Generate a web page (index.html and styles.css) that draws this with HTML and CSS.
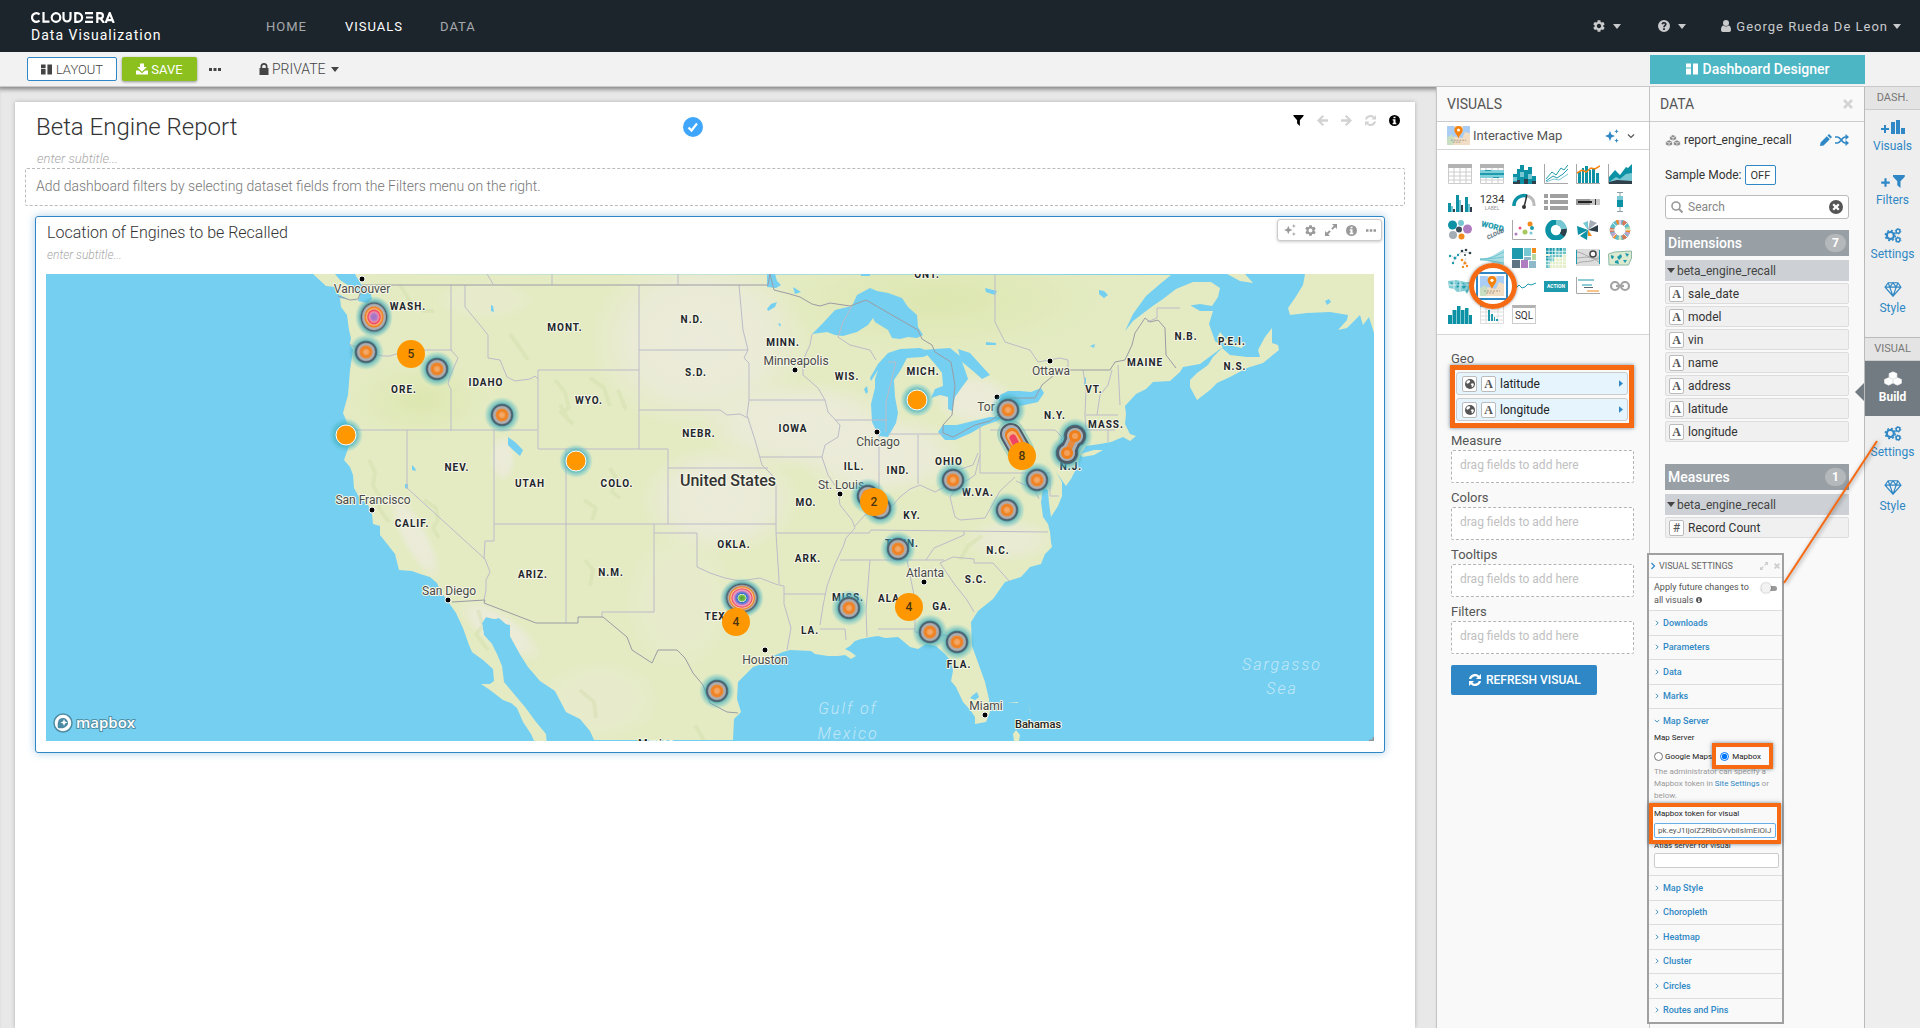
FILE: index.html
```html
<!DOCTYPE html>
<html lang="en">
<head>
  <meta charset="UTF-8">
  <meta name="viewport" content="width=device-width, initial-scale=1.0">
  <title>Beta Engine Report - Cloudera Data Visualization</title>
  <link rel="stylesheet" href="styles.css">
</head>
<body>
  <!-- icon sprite -->
  <svg class="sprite" aria-hidden="true">
    <symbol id="i-gear" viewBox="2 2 20 20"><path d="M19.14 12.94c.04-.3.06-.61.06-.94 0-.32-.02-.64-.07-.94l2.03-1.58c.18-.14.23-.41.12-.61l-1.92-3.32c-.12-.22-.37-.29-.59-.22l-2.39.96c-.5-.38-1.03-.7-1.62-.94l-.36-2.54c-.04-.24-.24-.41-.48-.41h-3.84c-.24 0-.43.17-.47.41l-.36 2.54c-.59.24-1.13.57-1.62.94l-2.39-.96c-.22-.08-.47 0-.59.22L2.74 8.87c-.12.21-.08.47.12.61l2.03 1.58c-.05.3-.09.63-.09.94s.02.64.07.94l-2.03 1.58c-.18.14-.23.41-.12.61l1.92 3.32c.12.22.37.29.59.22l2.39-.96c.5.38 1.03.7 1.62.94l.36 2.54c.05.24.24.41.48.41h3.84c.24 0 .44-.17.47-.41l.36-2.54c.59-.24 1.13-.56 1.62-.94l2.39.96c.22.08.47 0 .59-.22l1.92-3.32c.12-.22.07-.47-.12-.61l-2.01-1.58zM12 15.6c-1.98 0-3.6-1.62-3.6-3.6s1.62-3.6 3.6-3.6 3.6 1.62 3.6 3.6-1.62 3.6-3.6 3.6z"/></symbol>
    <symbol id="i-caret" viewBox="0 0 8 5"><path d="M0 0h8L4 5z"/></symbol>
    <symbol id="i-help" viewBox="0 0 12 12"><path fill-rule="evenodd" d="M6 0a6 6 0 1 0 0 12A6 6 0 0 0 6 0zM5.100 8.300h1.800V10H5.100zM3.500 3.900C3.800 2.600 4.700 2 6 2c1.500 0 2.600.9 2.600 2.200 0 1.700-1.800 1.800-1.800 3.100H5.200c0-1.900 1.700-2 1.700-3 0-.5-.4-.8-.9-.8s-.8.300-1 1z"/></symbol>
    <symbol id="i-user" viewBox="0 0 10 12"><circle cx="5" cy="3" r="3"/><path d="M0 10c0-3 1-4.500 2.500-4.500C4 6.900 6 6.900 7.500 5.500 9 5.500 10 7 10 10c0 1.300-.7 2-1.800 2H1.800C.7 12 0 11.300 0 10z"/></symbol>
    <symbol id="i-layout" viewBox="0 0 12 11"><path d="M0 0h5v4H0zM0 5h5v6H0zM7 0h5v11H7z"/></symbol>
    <symbol id="i-save" viewBox="0 0 12 11"><path d="M4 0h4v3.500h2.800L6 8.300 1.200 3.500H4zM0 7h2.800L6 9.800 9.200 7H12v4H0z"/></symbol>
    <symbol id="i-lock" viewBox="0 0 9 12"><path fill-rule="evenodd" d="M1 5V3.500a3.500 3.500 0 0 1 7 0V5h1v7H0V5zM2.700 5h3.600V3.500a1.800 1.800 0 0 0-3.600 0z"/></symbol>
    <symbol id="i-dots" viewBox="0 0 12 3"><path d="M0 0h3v3H0zM4.500 0h3v3h-3zM9 0h3v3H9z"/></symbol>
    <symbol id="i-filter" viewBox="0 0 11 12"><path d="M0 0h11v1.200L7 5.600V12L4 9.200V5.600L0 1.200z"/></symbol>
    <symbol id="i-arrow" viewBox="0 0 11 11"><path d="M5.500 0 7 1.500 4.300 4.300H11v2.400H4.300L7 9.500 5.500 11 0 5.500z"/></symbol>
    <symbol id="i-refresh" viewBox="0 0 12 12"><path d="M0 5A6 6 0 0 1 10.200 1.800L12 0v5H7l1.700-1.700A4 4 0 0 0 2.200 5zM12 7A6 6 0 0 1 1.800 10.200L0 12V7h5L3.300 8.700A4 4 0 0 0 9.800 7z"/></symbol>
    <symbol id="i-info" viewBox="0 0 12 12"><path fill-rule="evenodd" d="M6 0a6 6 0 1 0 0 12A6 6 0 0 0 6 0zM4.900 1.800h2.200v1.800H4.900zM4 4.600h3.100v3.900H8V10H4V8.500h.9V6.100H4z"/></symbol>
    <symbol id="i-spark" viewBox="0 0 14 14"><path d="M5 2l1.400 3.600L10 7 6.400 8.400 5 12 3.600 8.400 0 7l3.600-1.400zM11.500 0l.6 1.700 1.700.6-1.700.6-.6 1.700-.6-1.700-1.700-.6 1.700-.6zM11.500 9.300l.6 1.700 1.700.6-1.700.6-.6 1.700-.6-1.700-1.700-.6 1.700-.6z"/></symbol>
    <symbol id="i-expand" viewBox="0 0 12 12"><path d="M7 0h5v5l-1.800-1.800L7.600 5.800 6.200 4.400l2.600-2.600zM5 12H0V7l1.800 1.800 2.600-2.600 1.400 1.400-2.600 2.600z"/></symbol>
    <symbol id="i-close" viewBox="0 0 10 10"><path d="M2 0l3 3 3-3 2 2-3 3 3 3-2 2-3-3-3 3-2-2 3-3-3-3z"/></symbol>
    <symbol id="i-close-o" viewBox="0 0 14 14"><path fill-rule="evenodd" d="M7 0a7 7 0 1 0 0 14A7 7 0 0 0 7 0zM5 3.400l2 2 2-2L10.600 5l-2 2 2 2L9 10.600l-2-2-2 2L3.400 9l2-2-2-2z"/></symbol>
    <symbol id="i-chevron" viewBox="0 0 8 8"><path d="M1 2.500l3 3 3-3" fill="none" stroke="currentColor" stroke-width="1.200"/></symbol>
    <symbol id="i-pencil" viewBox="0 0 12 12"><path d="M9 0l3 3-1.500 1.500-3-3zM6.800 2.200l3 3L3.600 11.400 0 12l.6-3.600z"/></symbol>
    <symbol id="i-shuffle" viewBox="0 0 14 12"><path d="M0 3h2.500C5.500 3 7 9 10 9h1M0 9h2.500C5.500 9 7 3 10 3h1" fill="none" stroke="currentColor" stroke-width="1.700"/><path d="M10.500 0 14 3l-3.500 3zM10.500 6 14 9l-3.500 3z"/></symbol>
    <symbol id="i-search" viewBox="0 0 12 12"><circle cx="5" cy="5" r="4" fill="none" stroke="currentColor" stroke-width="1.600"/><path d="M8 8l3.500 3.500" stroke="currentColor" stroke-width="2"/></symbol>
    <symbol id="i-cubes" viewBox="0 0 18 14"><g stroke-width=".8" class="cube-line"><path d="M9 .4l3.800 1.700v3.700L9 7.500 5.200 5.800V2.100zM4.600 6.300l3.900 1.700v3.800l-3.900 1.800L.7 11.800V8zM13.400 6.300l3.900 1.700v3.800l-3.900 1.800-3.900-1.800V8z"/><path fill="none" d="M5.200 2.100L9 3.800l3.800-1.700M9 3.800v3.700M.7 8l3.900 1.800L8.500 8M4.600 9.800v3.800M9.500 8l3.900 1.800L17.300 8M13.400 9.800v3.800"/></g></symbol>
    <symbol id="i-bars" viewBox="0 0 24 15"><path d="M0 8h3V5h2v3h3v2H5v3H3v-3H0zM10 2h4v12h-4zM15 0h4v14h-4zM20 8h4v6h-4z"/></symbol>
    <symbol id="i-addfilter" viewBox="0 0 22 14"><path d="M0 7h3V4h2v3h3v2H5v3H3V9H0zM11 1h11v1.600l-4 4.200V13l-3-2.500V6.800l-4-4.200z"/></symbol>
    <symbol id="i-gears" viewBox="0 0 16 14"><g fill="none" stroke="currentColor"><circle cx="5.500" cy="7" r="3.300" stroke-width="2"/><circle cx="5.500" cy="7" r="4.700" stroke-width="1.300" stroke-dasharray="1.900 1.790"/><circle cx="12.700" cy="3" r="1.800" stroke-width="1.400"/><circle cx="12.700" cy="3" r="2.700" stroke-width=".9" stroke-dasharray="1.200 1.620"/><circle cx="12.700" cy="11" r="1.800" stroke-width="1.400"/><circle cx="12.700" cy="11" r="2.700" stroke-width=".9" stroke-dasharray="1.200 1.620"/></g></symbol>
    <symbol id="i-gem" viewBox="0 0 16 14"><path d="M3.500.7h9l2.900 4.100L8 13.300.6 4.800zM.6 4.800h14.800M5 4.800l3 8.500 3-8.500M3.500.7L5 4.800 8 .7l3 4.100L12.500.7" fill="none" stroke="currentColor" stroke-width="1.100"/></symbol>
    <symbol id="i-globe" viewBox="0 0 12 12"><circle cx="6" cy="6" r="6"/><path fill="#fff" d="M2.600 2.200C3.700 1.300 5 1.100 6 1.200l-.6 1.200 1 .6-.9 1.300-1.300.4-.4 1.100-1.300-.3-1-.6c.1-1 .5-1.900 1.100-2.700zM7.200 5.600l1.600-.5 1.800.6c.1 1.600-.6 3.100-1.900 4.100l-.9-.9.200-1.500-1.100-.7z"/></symbol>
    <symbol id="i-tri" viewBox="0 0 5 8"><path d="M0 0l5 4-5 4z"/></symbol>
    <symbol id="i-pinmap" viewBox="0 0 24 20">
      <path fill="#f1dcc4" d="M0 0h24v20H0z"/><path fill="#a9cdf4" d="M0 0h7l3 6 6 1 1-7h7v8l-5-2-3 7-8-2-8 4z"/><path fill="#c9dfc1" d="M0 12l5-3 3 5-2 6H0z"/>
      <path d="M4 15h16M6 17h9" stroke="#a99c8c" stroke-dasharray="2 1"/>
      <path fill="#f5820d" d="M12 0c2.600 0 4.400 1.800 4.400 4.200C16.400 7.200 13.500 9 12 13 10.500 9 7.600 7.200 7.600 4.200 7.600 1.800 9.400 0 12 0z"/><circle cx="12" cy="4.300" r="1.600" fill="#fff"/>
    </symbol>
  </svg>

  <header class="header">
    <a class="logo" href="#">
      <svg class="wordmark" viewBox="0 0 84 11" role="img" aria-label="Cloudera">
        <g fill="none" stroke="#fff" stroke-width="2.200">
          <path d="M8.500 2.600A4.300 4.300 0 1 0 8.500 8.400M12.500 0v9.700h6"/>
          <circle cx="25" cy="5.500" r="4.300"/>
          <path d="M32.500 0v6a3.400 3.400 0 0 0 7 0V0M44.300 1.200v8.600h2.500a4.300 4.300 0 0 0 0-8.600zM54 1.200h8M55 5.500h7M54 9.800h8M66.300 11V1.200h3a2.600 2.600 0 0 1 0 5.200h-3M69.500 6.400L73 11M74.700 11l4-10 4 10M76 8.200h5.500"/>
        </g>
      </svg>
      <span class="product">Data Visualization</span>
    </a>
    <nav class="nav">
      <a href="#">HOME</a>
      <a href="#" class="active">VISUALS</a>
      <a href="#">DATA</a>
    </nav>
    <div class="account">
      <button aria-label="Settings"><svg class="ic12"><use href="#i-gear"/></svg><svg class="caret"><use href="#i-caret"/></svg></button>
      <button aria-label="Help"><svg class="ic12"><use href="#i-help"/></svg><svg class="caret"><use href="#i-caret"/></svg></button>
      <button class="user"><svg class="ic12"><use href="#i-user"/></svg>George Rueda De Leon<svg class="caret"><use href="#i-caret"/></svg></button>
    </div>
  </header>

  <div class="toolbar">
    <button class="btn btn-layout"><svg class="ic11"><use href="#i-layout"/></svg>LAYOUT</button>
    <button class="btn btn-save"><svg class="ic12"><use href="#i-save"/></svg>SAVE</button>
    <button class="plain more" aria-label="More"><svg class="dots"><use href="#i-dots"/></svg></button>
    <button class="plain private"><svg class="ic12"><use href="#i-lock"/></svg>PRIVATE<svg class="caret"><use href="#i-caret"/></svg></button>
    <button class="designer"><svg class="ic12"><use href="#i-layout"/></svg>Dashboard Designer</button>
  </div>

  <main class="workspace">
    <section class="canvas">
      <div class="sheet">
        <div class="report-head">
          <h1>Beta Engine Report</h1>
          <svg class="check" viewBox="0 0 20 20"><circle cx="10" cy="10" r="10" fill="#3fa6fb"/><path d="M5.500 10.500l3 3 5.500-7" fill="none" stroke="#fff" stroke-width="2.200"/></svg>
          <div class="report-tools">
            <button aria-label="Filter" class="on"><svg class="ic11"><use href="#i-filter"/></svg></button>
            <button aria-label="Undo"><svg class="ic11"><use href="#i-arrow"/></svg></button>
            <button aria-label="Redo"><svg class="ic11 flip"><use href="#i-arrow"/></svg></button>
            <button aria-label="Refresh"><svg class="ic11"><use href="#i-refresh"/></svg></button>
            <button aria-label="Info" class="on"><svg class="ic11"><use href="#i-info"/></svg></button>
          </div>
        </div>
        <p class="subtitle">enter subtitle...</p>
        <div class="filter-drop">Add dashboard filters by selecting dataset fields from the Filters menu on the right.</div>

        <article class="visual">
          <div class="visual-tools">
            <button aria-label="Explore"><svg class="ic12"><use href="#i-spark"/></svg></button>
            <button aria-label="Visual settings"><svg class="ic11"><use href="#i-gear"/></svg></button>
            <button aria-label="Expand"><svg class="ic12"><use href="#i-expand"/></svg></button>
            <button aria-label="Visual info"><svg class="ic11"><use href="#i-info"/></svg></button>
            <button aria-label="Visual menu"><svg class="dots small-dots"><use href="#i-dots"/></svg></button>
          </div>
          <h2>Location of Engines to be Recalled</h2>
          <p class="subtitle small">enter subtitle...</p>

          <svg class="map" viewBox="46 274 1328 467">
            <defs>
              <radialGradient id="heat"><stop offset="0" stop-color="#f6b077"/><stop offset=".17" stop-color="#f19a4c"/><stop offset=".22" stop-color="#ef7f1a"/><stop offset=".34" stop-color="#ea8a3c"/><stop offset=".37" stop-color="#b5a79b"/><stop offset=".46" stop-color="#aab0b6"/><stop offset=".54" stop-color="#4d5c69"/><stop offset=".6" stop-color="#48727f"/><stop offset=".66" stop-color="#3fa9b8" stop-opacity=".65"/><stop offset="1" stop-color="#4cc0d0" stop-opacity="0"/></radialGradient>
              <radialGradient id="heat-mid"><stop offset="0" stop-color="#9a6fc0"/><stop offset=".17" stop-color="#b57cc9"/><stop offset=".24" stop-color="#f08fa8"/><stop offset=".32" stop-color="#ef4562"/><stop offset=".38" stop-color="#f6b077"/><stop offset=".47" stop-color="#ef7f1a"/><stop offset=".53" stop-color="#b5b3b3"/><stop offset=".6" stop-color="#9fa6ac"/><stop offset=".66" stop-color="#4d5c69"/><stop offset=".74" stop-color="#3f9fae" stop-opacity=".7"/><stop offset="1" stop-color="#4cc0d0" stop-opacity="0"/></radialGradient>
              <radialGradient id="heat-hot"><stop offset="0" stop-color="#4e9a2f"/><stop offset=".15" stop-color="#7cc24f"/><stop offset=".19" stop-color="#d9f0e0"/><stop offset=".22" stop-color="#2f63c4"/><stop offset=".27" stop-color="#5b86d8"/><stop offset=".31" stop-color="#9a6fc0"/><stop offset=".36" stop-color="#d491c9"/><stop offset=".4" stop-color="#f0a3ba"/><stop offset=".46" stop-color="#ef4562"/><stop offset=".5" stop-color="#f6c9a0"/><stop offset=".56" stop-color="#ef7f1a"/><stop offset=".61" stop-color="#b5b3b3"/><stop offset=".69" stop-color="#4d5c69"/><stop offset=".77" stop-color="#3f9fae" stop-opacity=".7"/><stop offset="1" stop-color="#4cc0d0" stop-opacity="0"/></radialGradient>
              <radialGradient id="glow"><stop offset=".5" stop-color="#3fa9b8"/><stop offset="1" stop-color="#4cc0d0" stop-opacity="0"/></radialGradient>
              <radialGradient id="plain"><stop offset="0" stop-color="#ecebdb"/><stop offset=".6" stop-color="#ecebdb" stop-opacity=".8"/><stop offset="1" stop-color="#ecebdb" stop-opacity="0"/></radialGradient>
              <radialGradient id="green"><stop offset="0" stop-color="#dde7b0"/><stop offset="1" stop-color="#dde7b0" stop-opacity="0"/></radialGradient>
              <clipPath id="land-clip"><use href="#land"/></clipPath>
            </defs>
            <path class="water" d="M46 274h1328v467H46z"/>
            <g class="land">
              <path id="land" d="M354 274l4 5 3 5 5 7 5 3 1 5-5 4-9-2-18-3 1 9 6 8 2 15 2 8-1 6 3 6-3 20-2 25-5 18 5 12 1 21-5 14 6 7 3 8 1 13 5 9 9 8 4 9 1 10 7 2v9l8 10 7 9 4 16 13 1 8 3 10 3 7 6 4 9 6 8 9 13 7 15 6 17 3 7 11 8 10 9 1 12-4 3h-9l9 6 13 10 8 3 6 5 6 14 8 12 5 11h11l-1-11-10-12-11-15-11-13-10-12-2-16-5-12-5-10-8-9-2-12 4-6 8 2 5-1 7 6 4 1v11l11 20 7 11 12 14 15 10 11 21 14 7 10 12 4 9h139l1-21 7-7-4-13 1-17 10-10 5-5 15-5 5-6 10-4 7-2 21 1 4 3 13 2h10l7-1 6 4 5-3-5-4-6-3 5-3 5-5 6-2 10-2 7-1 7 2 13-1 5 4 7 6 8 2 8-5 10 2 9 8 6 7 2 10-2 10 5 6 7 15 8 9 4 6v7l11-2 4-10-1-13-4-17-9-25-4-11-1-24 7-11 15-12 12-17 16-5 9-10 11-3 4-10 7-7-1-5-1-10-2-8-5-7-2-15 2-14 5 2 1 13 2 14 7-11 4-10v-14l-6-10 10 14 5-7 5-10 3-10 2-5 5-8 14-2 11-2 12-5 7 4 6-5-6-2-5-10 1-10-1-8 11-12 10-5 7-7 17-1 10-9 3-5 17-3 16-12 7-5-8-6-6-17 4-13h-13l-12-7-8 3 20-3 12 2 6-9 2-9-9-6h-18l-17 7-13 10-13 9-17 13-8 10 8-17 13-18 14-12 11-9z"/>
              <path d="M313 274l13 12 9 1 3 7 12 6 8 1 2-6-8-7-12-8-5-6z"/>
              <path d="M1222 348l-9 9-5 8-11 8-7 7v7l7 13 13-10 7-7 13-6 17-9 16-5 16-13-1-5-6-2v-15l-7 9-7 13 2 7h-13l-17-2z"/>
              <path d="M1217 338l3-6 5 6 10 5 10-1-3 6-14-3z"/>
              <path d="M1305 274l-2 11-8 13-7 10 2 7 17-2 23-1 18 3-1 5-9 10 9-2 13-13 3 10 6-8 5 16v-59h-6M1227 274l13 7 13 2-8-9z"/>
              <path d="M1018 450l-2 1zM1080 454l14-4 9 0-9 5-12 2zM1013 734l3-4 4 5-1 6h-5zM1028 703l2 7 1 5zM1007 703l11-1v1z"/>
            </g>
            <g clip-path="url(#land-clip)">
              <ellipse cx="700" cy="340" rx="110" ry="90" fill="url(#plain)"/><ellipse cx="720" cy="500" rx="80" ry="55" fill="url(#plain)"/><ellipse cx="800" cy="425" rx="100" ry="45" fill="url(#plain)"/><ellipse cx="880" cy="455" rx="85" ry="42" fill="url(#plain)"/><ellipse cx="680" cy="600" rx="55" ry="70" fill="url(#plain)" opacity=".4"/><ellipse cx="975" cy="400" rx="40" ry="26" fill="url(#plain)"/><ellipse cx="485" cy="300" rx="50" ry="20" fill="url(#plain)" opacity=".4"/><ellipse cx="415" cy="537" rx="14" ry="50" fill="url(#plain)" transform="rotate(-28 415 537)"/><ellipse cx="503" cy="458" rx="13" ry="24" fill="url(#plain)"/><ellipse cx="500" cy="630" rx="50" ry="18" fill="url(#plain)" transform="rotate(35 500 630)"/><ellipse cx="1010" cy="540" rx="45" ry="22" fill="url(#plain)" opacity=".7"/><ellipse cx="600" cy="700" rx="60" ry="40" fill="url(#plain)" opacity=".4"/><ellipse cx="940" cy="300" rx="170" ry="55" fill="url(#green)"/><ellipse cx="420" cy="400" rx="70" ry="40" fill="url(#green)"/>
              <g class="relief"><path d="M369 460l6 12-2 14 8 12-2 10 10 14M424 500l12 8 2 12-5 8 6 10M555 380l10 12 4 16-8 4 12 12M590 378l14 10 6 18M610 468l6 10-4 14 8 6M584 500l12 8-4 12M528 360l-8-12-10-14M400 285l10 16 14 10 10 0M585 560l8 10-3 16M960 560l8-14 14-10M580 690l14 12 2 16M695 725l8 14 6 8M478 610l5 16-7 8 12 16M618 390l8 20M560 405l8 14"/></g>
            </g>
            <g class="water">
              <path d="M812 334l11-11 12-13 17-4 5-11 13-7 7 3 11 2 14 5 6 9 9 8 1 12 5 8-6 3-9-1-8 2-8-1-4-8-13-8-2-4-5 7-11 7-14 4-8-1-8-3z"/>
              <path d="M888 353l12-4 20-1 13 5-10 4-16 1-7 13-6 9 1 17 3 16-2 10-8 14-9-1-7-14-1-18 4-16 0-9 3-9-7 11-1-3 8-14z"/>
              <path d="M923 350l12-1 15-1 10 8 5 14 3 9-6 8-7 10-3 14-4-2 0-12-8-2-9 3 4-9 8-3-1-13-7-9z"/>
              <path d="M958 349l12 4 9 10 11 12-8 4-9-8-12-10zM938 432l5-7h14l16-4 17-4 12 0-5 4-14 5-12 7-16 7-10 0zM998 396l10-5 12 0 11 1 10-4 3 5-6 9-18 4-14-1-7-4z"/>
              <path d="M508 437l7 5 8 8-3 6-7-6-5-5zM767 274h8l2 7 4 4-5 3-9-1zM767 309l4-5 6-2-2 5-7 4zM778 323l3 1-1 3zM793 287l8 5-6 2zM1099 290l5 1 4 4-4 3-5-4zM985 288l12 3-2 4-9-3zM986 342l10 1v2h-10zM1090 346l5-2-1 4zM1325 301l4-2 2 3-4 3zM412 465l3 3 1 3-4-1zM405 484l3 0 0 5-3-1zM491 305l2 1 1 6-3-1zM973 695l4-3 2 5-4 3-5-2zM861 274h9v2h-9zM344 274h11l4 9 4 6-3 4-8-5zM864 389l3-3 1 6-2 2zM1084 377l2 1 0 8-2 0z"/>
            </g>
            <g class="state-line">
              <path d="M349 344l17 8 17 4h7l6-2 29-4h27M451 285v65l7 8-8 18-2 8 3 5v42M350 430h187M407 430v58l78 71 5 13-4 8v10l-2 10M494 430v111h-9l-1 18M465 285v22l15 18 8 10v23l12 2 7 17 8 4 15-2 5-3 3 3v-9h101v79H538v-70M566 449v174M494 524h282M639 285v85M639 350h109M639 410h81l7 5 13-1 8 4M639 449h29v75M668 468h100M739 285l4 45 5 20-4 8 5 5v37l-2 15 8 25 7 25 10 10 4 10v48M749 400h76M760 457h62M812 334l-2 11-7 15v15l15 13 7 12 3 12 12 13-2 12-13 8-3 12 6 18 10 15 2 15 12 15 3 8-9 10-3 9-8 17-8 22-4 20-3 19M835 420h52M838 337l12 8 20 5 6 10M838 337l5-15 9-16M888 362h8l-10 40v30M879 435v50l-2 20M918 435v49M888 434h55M776 533h66M842 533h27l2-3 177 2M855 526l10-11 15-5 13-5 7-8 10-8 10-4 15 7 15-8 8-14 15-5 5-12M840 560h104M784 594h41M776 533l3 47v5l5 1v18l7 24-4 22M654 524v88h-52v5M654 533h43v34l13 6 15 5 15 3 20-3 18 7M870 560l-4 50 1 27M907 560l8 40v32l35 4M878 629h37M820 629h25l1 11M926 560l8-12 14-6 16-7v-4M940 563l13-6 21 2v4h19l17 19M940 563l15 22 12 15 7 12M980 425v48h70M990 430h65l7 7-2 12M980 455l-5 20-15 10-10 12 5 20 5 3 25-2 10-18 5-9 15-14M1050 475v21h9M1083 370l3 20-1 25 1 15-3 15M1112 370l-4 15-8 10-3 20M1118 365l2 40M1086 415h32M1086 430h29M1108 430v12M995 274v48l10 20 25 8 8 12 22-4 8 2v9M1147 322l10-4v-10h23M552 274v11M678 274v11M487 274l6 10M1016 481l18 8 5 10"/>
            </g>
            <g class="country-line">
              <path d="M338 296l12 4 8-1 4-10v-4h406l2-11 4 16 16 4 10 3 12 7 8 2 10-3 20 3 16-6 52 30 4 9 10 6 3 7 16 10 4 23-3 30-9 10v8l10 4 22-12 15-4 15-11 5-12h25l7-13 18-15h50l5-8 10-2 7-15 3-12 10-15 5 4 8-2 7 8 1 27 10 13"/>
              <path d="M452 602l33-2-1 3 52 20h42v-6h25l12 10 12 10 5 13 20 13 6-13h19l8 8 8 15 10 12 7 18 17 9 11 1"/>
            </g>

            <g class="state">
              <text x="408" y="310">WASH.</text><text x="404" y="393">ORE.</text><text x="486" y="386">IDAHO</text><text x="457" y="471">NEV.</text><text x="412" y="527">CALIF.</text><text x="565" y="331">MONT.</text><text x="692" y="323">N.D.</text><text x="696" y="376">S.D.</text><text x="589" y="404">WYO.</text><text x="699" y="437">NEBR.</text><text x="530" y="487">UTAH</text><text x="617" y="487">COLO.</text><text x="533" y="578">ARIZ.</text><text x="611" y="576">N.M.</text><text x="734" y="548">OKLA.</text><text x="717" y="620">TEX.</text><text x="783" y="346">MINN.</text><text x="847" y="380">WIS.</text><text x="923" y="375">MICH.</text><text x="793" y="432">IOWA</text><text x="854" y="470">ILL.</text><text x="898" y="474">IND.</text><text x="806" y="506">MO.</text><text x="912" y="519">KY.</text><text x="808" y="562">ARK.</text><text x="902" y="547">TENN.</text><text x="848" y="601">MISS.</text><text x="891" y="602">ALA.</text><text x="810" y="634">LA.</text><text x="942" y="610">GA.</text><text x="959" y="668">FLA.</text><text x="949" y="465">OHIO</text><text x="978" y="496">W.VA.</text><text x="998" y="554">N.C.</text><text x="976" y="583">S.C.</text><text x="1055" y="419">N.Y.</text><text x="1094" y="393">VT.</text><text x="1106" y="428">MASS.</text><text x="1071" y="470">N.J.</text><text x="1145" y="366">MAINE</text><text x="1186" y="340">N.B.</text><text x="1232" y="345">P.E.I.</text><text x="1235" y="370">N.S.</text><text x="927" y="278">ONT.</text>
            </g>
            <g class="city">
              <text x="362" y="293">Vancouver</text><text x="373" y="504">San Francisco</text><text x="449" y="595">San Diego</text><text x="796" y="365">Minneapolis</text><text x="878" y="446">Chicago</text><text x="841" y="489">St. Louis</text><text x="925" y="577">Atlanta</text><text x="765" y="664">Houston</text><text x="986" y="710">Miami</text><text x="1051" y="375">Ottawa</text><text x="986" y="411">Tor</text>
            </g>
            <g class="city-dot">
              <circle cx="362" cy="279" r="3"/><circle cx="372" cy="510" r="3"/><circle cx="448" cy="600" r="3"/><circle cx="795" cy="370" r="3"/><circle cx="877" cy="432" r="3"/><circle cx="840" cy="494" r="3"/><circle cx="924" cy="582" r="3"/><circle cx="765" cy="650" r="3"/><circle cx="985" cy="715" r="3"/><circle cx="1050" cy="361" r="3"/><circle cx="997" cy="397" r="3"/>
            </g>
            <text class="country" x="728" y="486">United States</text>
            <text class="bahamas" x="1038" y="728">Bahamas</text>
            <text class="bahamas" x="656" y="747">Mexico</text>
            <g class="sea">
              <text x="848" y="714">Gulf of</text><text x="848" y="739">Mexico</text>
              <text x="1282" y="670">Sargasso</text><text x="1282" y="694">Sea</text>
            </g>

            <!-- heat spots -->
            <g fill="url(#heat)">
              <circle cx="366" cy="352" r="18"/><circle cx="437" cy="369" r="18"/><circle cx="502" cy="415" r="18"/><circle cx="868" cy="496" r="18"/><circle cx="880" cy="508" r="18"/><circle cx="898" cy="549" r="18"/><circle cx="849" cy="608" r="18"/><circle cx="930" cy="632" r="18"/><circle cx="717" cy="691" r="18"/><circle cx="1008" cy="410" r="18"/><circle cx="1037" cy="480" r="18"/><circle cx="953" cy="480" r="18"/><circle cx="1007" cy="510" r="18"/><circle cx="957" cy="642" r="18"/>
            </g>
            <ellipse cx="374" cy="317" rx="19" ry="21" fill="url(#heat-mid)"/>
            <ellipse cx="742" cy="598" rx="22" ry="20" fill="url(#heat-hot)"/>
            <g class="merged">
              <circle cx="1075" cy="436" r="18" fill="url(#heat)"/><circle cx="1067" cy="453" r="18" fill="url(#heat)"/>
              <path d="M1075 436l-8 17" stroke="#4d5c69" stroke-width="17"/><path d="M1075 436h.1M1067 453h.1" stroke="#4d5c69" stroke-width="20"/><path d="M1075 436l-8 17" stroke="#aab0b6" stroke-width="12"/><path d="M1075 436h.1M1067 453h.1" stroke="#aab0b6" stroke-width="16"/><path d="M1075 436l-8 17" stroke="#e58a3e" stroke-width="6"/><path d="M1075 436h.1M1067 453h.1" stroke="#ef7f1a" stroke-width="12"/><path d="M1075 436h.1M1067 453h.1" stroke="#f3a05a" stroke-width="6"/>
              <path d="M1011 434l9 16" stroke="#3fa9b8" stroke-opacity=".35" stroke-width="28"/><path d="M1011 434l9 16" stroke="#4d5c69" stroke-width="22"/><path d="M1011 434l9 16" stroke="#aab0b6" stroke-width="18"/><path d="M1012 435l8 15" stroke="#ef7f1a" stroke-width="14"/><path d="M1012 436l8 14" stroke="#f6b077" stroke-width="10"/><path d="M1013 438l6 12" stroke="#ef4562" stroke-width="7"/>
            </g>

            <g fill="url(#glow)"><circle cx="346" cy="435" r="17"/><circle cx="576" cy="461" r="17"/><circle cx="917" cy="400" r="17"/></g>
            <g class="pin"><circle cx="346" cy="435" r="10"/><circle cx="576" cy="461" r="10"/><circle cx="917" cy="400" r="10"/></g>
            <g class="cluster">
              <circle cx="411" cy="354" r="14"/><text x="411" y="358">5</text>
              <circle cx="874" cy="502" r="14"/><text x="874" y="506">2</text>
              <circle cx="1022" cy="456" r="14"/><text x="1022" y="460">8</text>
              <circle cx="909" cy="607" r="14"/><text x="909" y="611">4</text>
              <circle cx="736" cy="622" r="14"/><text x="736" y="626">4</text>
            </g>

            <g class="mapbox">
              <circle cx="63" cy="723" r="9" fill="#fff" stroke="#4f8da3" stroke-width="1.500"/>
              <path d="M58 728c-1-5 0-10 5-10a5 5 0 0 1 5 5c0 4-5 6-10 5z" fill="#4a8aa2"/><path d="M64 719l1 2.500 2.500 1-2.500 1-1 2.500-1-2.500-2.500-1 2.500-1z" fill="#fff"/>
              <text x="76" y="728">mapbox</text>
            </g>
            <path d="M1374 737v4h-5" fill="none" stroke="#8f979c" stroke-width="3"/>
          </svg>
        </article>
      </div>
    </section>

    <aside class="panel visuals-panel">
      <h3 class="panel-title">VISUALS</h3>
      <div class="current-type">
        <svg class="ic-map"><use href="#i-pinmap"/></svg>
        <span>Interactive Map</span>
        <svg class="ic14 blue"><use href="#i-spark"/></svg>
        <svg class="ic8"><use href="#i-chevron"/></svg>
      </div>
      <div class="types">
        <button aria-label="Table"><svg viewBox="0 0 24 20"><path fill="#fff" stroke="#ccc" d="M.5.5h23v19H.5zM.5 8h23M.5 12h23M.5 16h23M6 3v17M12 3v17M18 3v17"/><path fill="#b3b3b3" d="M0 0h24v4H0z"/></svg></button>
        <button aria-label="Cross tabs"><svg viewBox="0 0 24 20"><path fill="#fff" stroke="#ccc" d="M.5.500h23v19H.5zM.5 16h23M6 3v17M12 3v17M18 3v17"/><path fill="#b3b3b3" d="M0 0h24v4H0z"/><path fill="#7fd0da" d="M0 6h24v8H0z"/><path fill="#1e9aac" d="M0 9h24v2H0zM5 6h6v1H5zM13 13h6v1h-6z"/></svg></button>
        <button aria-label="Stacked bars"><svg viewBox="0 0 24 20"><path fill="#0d92a5" d="M1 10h4v10H1zM5 5h3v15H5zM8 1h4v19H8zM12 6h4v14h-4zM16 3h4v17h-4zM20 12h4v8h-4z"/><path fill="#78c8d4" d="M1 13h4v4H1zM8 8h4v5H8zM16 10h4v5h-4z"/><path fill="#30404b" d="M1 18h4v2H1zM5 16h3v4H5zM12 15h4v5h-4zM20 17h4v3h-4z"/></svg></button>
        <button aria-label="Lines"><svg viewBox="0 0 24 20"><path fill="none" stroke="#a8a8a8" d="M.5 0v19.500H24"/><path fill="none" stroke="#1e9aac" d="M2 15l6-7 4 3 5-7 3 2 4-5M2 17l7-5 4 2 6-4 5-5"/><path fill="none" stroke="#78c8d4" d="M2 18l8-3 5 1 9-6"/></svg></button>
        <button aria-label="Combo"><svg viewBox="0 0 24 20"><path fill="none" stroke="#a8a8a8" d="M.5 0v19.500H24"/><path fill="#0d92a5" d="M2 8h3v11H2zM6 4h2v15H6zM9 2h3v17H9zM13 6h2v13h-2zM16 4h3v15h-3zM20 9h3v10h-3z"/><path fill="none" stroke="#f5820d" stroke-width="1.500" d="M1 9l5-3 4 2 5-4 4 1 5-3"/></svg></button>
        <button aria-label="Areas"><svg viewBox="0 0 24 20"><path fill="#78c8d4" d="M1 15l7-6 5 4 5-6 6 2v11H1z"/><path fill="#0d92a5" d="M1 13l6-7 5 5 6-8 2 1 4-4v9l-6 1-6 5-4-2-7 5z"/><path fill="#30404b" d="M1 18l8-2 15 1v3H1z"/><path fill="none" stroke="#a8a8a8" d="M.5 0v19.500"/></svg></button>
        <button aria-label="Grouped bars"><svg viewBox="0 0 24 20"><path fill="#0d92a5" d="M0 11h3v9H0zM8 3h3v17H8zM17 5h3v15h-3z"/><path fill="#78c8d4" d="M3 14h2v6H3zM11 8h2v12h-2zM20 12h2v8h-2z"/><path fill="#30404b" d="M5 17h2v3H5zM13 13h2v7h-2zM22 15h2v5h-2z"/></svg></button>
        <button class="kpi" aria-label="KPI"><b>1234</b><small>LABEL</small></button>
        <button aria-label="Gauge"><svg viewBox="0 0 24 20"><path fill="none" stroke="#0d92a5" stroke-width="3.500" d="M2 14a10 10 0 0 1 13-10"/><path fill="none" stroke="#bbb" stroke-width="3" d="M16 4a10 10 0 0 1 6 10"/><path stroke="#333" stroke-width="1.500" d="M12 15l3-12"/><circle cx="12" cy="15" r="2" fill="#333"/></svg></button>
        <button aria-label="List"><svg viewBox="0 0 24 20"><path fill="#a0a0a0" d="M0 2h4v4H0zM6 2h18v4H6zM0 8h4v4H0zM6 8h18v4H6zM0 14h4v4H0zM6 14h18v4H6z"/></svg></button>
        <button aria-label="Bullet"><svg viewBox="0 0 24 20"><path fill="#c7c7c7" d="M0 7h24v6H0z"/><path fill="#999" d="M0 7h14v6H0z"/><path fill="#222" d="M2 9h14v2H2z"/><path fill="#333" d="M19 7h1v6h-1z"/></svg></button>
        <button aria-label="Box plot"><svg viewBox="0 0 24 20"><path stroke="#8aa0a6" d="M12 0v20M9 .500h6M9 19.500h6"/><path fill="#78c8d4" d="M9 4h6v11H9z"/><path fill="#0d92a5" d="M9 8h6v7H9z"/></svg></button>
        <button aria-label="Packed bubbles"><svg viewBox="0 0 24 20"><circle cx="4.500" cy="5" r="4.500" fill="#0d92a5"/><circle cx="13" cy="3" r="3" fill="#78c8d4"/><circle cx="19.500" cy="9" r="4.500" fill="#b07cc0"/><circle cx="11" cy="9.500" r="3" fill="#3e4f5b"/><circle cx="5" cy="15" r="4" fill="#a4adb5"/><circle cx="13.500" cy="16.500" r="3" fill="#f28a1c"/></svg></button>
        <button class="cloud" aria-label="Word cloud"><b>WORD</b><i>CLOUD</i></button>
        <button aria-label="Scatter"><svg viewBox="0 0 24 20"><path fill="none" stroke="#a8a8a8" d="M.5 0v19.500H24"/><circle cx="18" cy="4" r="2.500" fill="#f28a1c"/><circle cx="20" cy="8" r="2" fill="#1e9aac"/><circle cx="13" cy="12" r="2.500" fill="#a7c95b"/><circle cx="8" cy="8" r="1.500" fill="#e4577b"/><circle cx="19" cy="13" r="1.500" fill="#78c8d4"/><circle cx="4" cy="14" r="1.500" fill="#b07cc0"/></svg></button>
        <button aria-label="Pie"><svg viewBox="0 0 24 20"><g fill="none" stroke-width="5.500"><circle cx="12" cy="10" r="8" stroke="#0d92a5"/><path d="M12 2A8 8 0 0 1 20 10" stroke="#78c8d4"/><path d="M20 9a8 8 0 0 1-2 6" stroke="#30404b"/></g></svg></button>
        <button aria-label="Radial"><svg viewBox="0 0 24 20"><path fill="#0d92a5" d="M12 10L2 15 1 6zM12 10l-1 10-7-4z"/><path fill="#78c8d4" d="M12 10L7 3l5-2z"/><path fill="#a4adb5" d="M12 10l2-10 7 3z"/><path fill="#30404b" d="M12 10l10-5v7z"/><path fill="#f28a1c" d="M12 10l4 6h-4z"/></svg></button>
        <button aria-label="Chord"><svg viewBox="0 0 24 20"><g fill="none" stroke-width="4.500"><circle cx="12" cy="10" r="8" stroke="#5fbccb"/><circle cx="12" cy="10" r="8" stroke="#c1a2cf" stroke-dasharray="5 12"/><circle cx="12" cy="10" r="8" stroke="#f28a1c" stroke-dasharray="2 15"/><circle cx="12" cy="10" r="8" stroke="#d6785a" stroke-dasharray="0 6 4 7"/><circle cx="12" cy="10" r="8" stroke="#b9d8a0" stroke-dasharray="0 11 3 22"/></g><path stroke="#fff" stroke-width=".8" d="M12 0v20M2 10h20M5 3l14 14M19 3L5 17"/></svg></button>
        <button aria-label="Network"><svg viewBox="0 0 24 20"><path stroke="#b9c2c8" stroke-width=".6" fill="none" d="M2 7l5 3-2 5M7 10l6-6 9 1M15 17l3-7"/><g fill="#1e9aac"><circle cx="2" cy="8" r="1.200"/><circle cx="7" cy="10" r="1.500"/><circle cx="5" cy="15" r="1.200"/><circle cx="10" cy="7" r="1.200"/></g><g fill="#30404b"><circle cx="14" cy="3" r="1.300"/><circle cx="18" cy="2" r="1.300"/><circle cx="22" cy="5" r="1.300"/><circle cx="17" cy="7" r="1"/></g><g fill="#f28a1c"><circle cx="14" cy="12" r="1.300"/><circle cx="17" cy="15" r="1.500"/><circle cx="15" cy="19" r="1.200"/><circle cx="19" cy="18" r="1.200"/></g></svg></button>
        <button aria-label="Flow"><svg viewBox="0 0 24 20"><path fill="#a9dde3" d="M0 11C12 10 15 6 24 1v16c-8 0-12-4-24-5z"/><path stroke="#5bbcc9" fill="none" stroke-width=".7" d="M0 11c12 0 15-3 24-7M0 11c12 0 16-1 24-2M0 12c12 0 16 2 24 3"/></svg></button>
        <button aria-label="Treemap"><svg viewBox="0 0 24 20"><path fill="#1e9aac" d="M0 0h11v11H0z"/><path fill="#78c8d4" d="M12 0h7v8h-7z"/><path fill="#f28a1c" d="M20 0h4v5h-4z"/><path fill="#b9d8a0" d="M20 6h4v6h-4z"/><path fill="#5f7482" d="M0 12h8v8H0z"/><path fill="#b07cc0" d="M9 12h7v8H9z"/><path fill="#8fb9c9" d="M12 9h7v3h-7zM17 13h7v7h-7z"/></svg></button>
        <button aria-label="Heatmap"><svg viewBox="0 0 24 20"><path fill="#e5efc9" d="M2 0h20v20H2z"/><path fill="#1e9aac" d="M2 0h8v6H2zM13 0h5v3h-5zM2 8h4v4H2z"/><path fill="#6cc3c6" d="M10 0h3v9h-3zM18 0h4v6h-4zM6 6h4v8H6zM13 3h5v6h-5zM2 12h4v8H2z"/><path stroke="#fff" stroke-width=".7" d="M5 0v20M8.300 0v20M11.600 0v20M15 0v20M18.500 0v20M2 3.300h20M2 6.600h20M2 10h20M2 13.300h20M2 16.600h20"/></svg></button>
        <button aria-label="Flow settings"><svg viewBox="0 0 24 20"><path fill="#ddd" d="M0 1h24v17H0z"/><path stroke="#aaa" fill="none" d="M0 4c8 0 14 8 24 7M0 10c8 0 14-4 24 5M0 16c8-5 14 1 24-8"/><path fill="#1e9aac" d="M0 2h1v14H0zM23 2h1v14h-1z"/><circle cx="17" cy="6" r="3" fill="#fff" stroke="#444" stroke-width="1.500"/></svg></button>
        <button aria-label="Choropleth"><svg viewBox="0 0 24 20"><path fill="#dcebd0" stroke="#8eb8a8" d="M.5 6l6-2 17-1v7l-3 7H1z"/><path fill="#1e9aac" d="M3 7l3 1-1 3-2-1zM9 9l4-3 1 3-3 3zM17 5l4 1-2 3zM7 13l3-1 1 4-4-1zM15 12h4l-2 3z"/></svg></button>
        <button aria-label="US map"><svg viewBox="0 0 24 20"><path fill="#83cdd5" d="M0 5l8-1 10 2 6 0-2 6-3 6-2-3-8 1-3-3-5-1z"/><path fill="#1e9aac" d="M2 6l3 1-1 2zM8 9l3-3 1 4-3 2zM15 7l4 2-3 4-2-2zM18 15l2-2-1 4z"/><path stroke="#e8f6f7" stroke-width=".8" d="M6 4v9M12 5v10M1 9h20"/></svg></button>
        <button class="selected" aria-label="Interactive map"><svg viewBox="0 0 24 20"><use href="#i-pinmap"/></svg></button>
        <button aria-label="Sparkline"><svg viewBox="0 0 24 20"><path fill="none" stroke="#1e9aac" d="M0 12l4 0 3-3 3 3 3-1 3-3 3 1 5-2"/></svg></button>
        <button class="action" aria-label="Action"><b>ACTION</b></button>
        <button aria-label="Gantt"><svg viewBox="0 0 24 20"><path fill="none" stroke="#a8a8a8" d="M.5 1v16.500H24"/><path fill="none" stroke="#1e9aac" d="M2 4h16M6 9h10"/><path fill="none" stroke="#30404b" stroke-width=".8" d="M8 11.500h9"/><path fill="none" stroke="#f28a1c" d="M11 15h12"/></svg></button>
        <button aria-label="Link"><svg viewBox="0 0 24 20"><g fill="none" stroke="#a3a3a3" stroke-width="2.200"><rect x="3" y="6" width="8" height="8" rx="4"/><rect x="13" y="6" width="8" height="8" rx="4"/><path d="M8 10h8"/></g></svg></button>
        <button aria-label="Histogram"><svg viewBox="0 0 24 20"><path fill="#0d92a5" d="M0 11h4v9H0zM4.500 6h4v14h-4zM9 2h3.500v18H9zM13 6h3.500v14H13zM17 4h3.500v16H17zM21 11h3v9h-3z"/></svg></button>
        <button aria-label="Table bars"><svg viewBox="0 0 24 20"><path fill="#fff" stroke="#ddd" d="M.5.500h23v19H.5zM.5 8h23M.5 12h23M.5 16h23M6 3v17M18 3v17"/><path fill="#b3b3b3" d="M0 0h24v3H0z"/><path fill="#1e9aac" d="M8 6h2v11H8zM11 10h2v7h-2zM14 13h1v4h-1zM16 15h2v2h-2z"/></svg></button>
        <button class="sql" aria-label="SQL"><b>SQL</b></button>
        <span class="ring"></span>
      </div>

      <div class="shelves">
        <div class="shelf-label">Geo</div>
        <div class="highlight geo">
          <button class="pill"><span class="tag"><svg class="ic10"><use href="#i-globe"/></svg></span><span class="tag">A</span>latitude<svg class="tri"><use href="#i-tri"/></svg></button>
          <button class="pill"><span class="tag"><svg class="ic10"><use href="#i-globe"/></svg></span><span class="tag">A</span>longitude<svg class="tri"><use href="#i-tri"/></svg></button>
        </div>
        <div class="shelf-label">Measure</div>
        <div class="shelf">drag fields to add here</div>
        <div class="shelf-label">Colors</div>
        <div class="shelf">drag fields to add here</div>
        <div class="shelf-label">Tooltips</div>
        <div class="shelf">drag fields to add here</div>
        <div class="shelf-label">Filters</div>
        <div class="shelf">drag fields to add here</div>
        <button class="refresh"><svg class="ic12"><use href="#i-refresh"/></svg>REFRESH VISUAL</button>
      </div>
    </aside>

    <aside class="panel data-panel">
      <h3 class="panel-title">DATA<button class="plain close" aria-label="Close"><svg class="ic10"><use href="#i-close"/></svg></button></h3>
      <div class="data-body">
        <div class="dataset"><svg class="cubes"><use href="#i-cubes"/></svg><span>report_engine_recall</span><svg class="ic12 blue"><use href="#i-pencil"/></svg><svg class="ic14 blue"><use href="#i-shuffle"/></svg></div>
        <div class="sample"><span>Sample Mode:</span><button>OFF</button></div>
        <div class="search"><svg class="ic12"><use href="#i-search"/></svg><input type="text" placeholder="Search" aria-label="Search"><button class="plain" aria-label="Clear"><svg class="ic14"><use href="#i-close-o"/></svg></button></div>

        <div class="group"><span>Dimensions</span><span class="count">7</span></div>
        <div class="source"><svg class="caret"><use href="#i-caret"/></svg>beta_engine_recall</div>
        <ul class="fields">
          <li><span class="tag">A</span>sale_date</li>
          <li><span class="tag">A</span>model</li>
          <li><span class="tag">A</span>vin</li>
          <li><span class="tag">A</span>name</li>
          <li><span class="tag">A</span>address</li>
          <li><span class="tag">A</span>latitude</li>
          <li><span class="tag">A</span>longitude</li>
        </ul>
        <div class="group measures"><span>Measures</span><span class="count">1</span></div>
        <div class="source"><svg class="caret"><use href="#i-caret"/></svg>beta_engine_recall</div>
        <ul class="fields">
          <li><span class="tag hash">#</span>Record Count</li>
        </ul>
      </div>

      <section class="settings-popup">
        <div class="popup-head"><svg class="ic8 right"><use href="#i-chevron"/></svg><span>VISUAL SETTINGS</span><svg class="ic8"><use href="#i-expand"/></svg><svg class="ic6"><use href="#i-close"/></svg></div>
        <div class="apply"><label for="apply-all">Apply future changes to all visuals <svg class="ic6"><use href="#i-info"/></svg></label><input type="checkbox" id="apply-all"></div>
        <div class="rows four">
          <a href="#"><svg class="ic6 right"><use href="#i-chevron"/></svg>Downloads</a>
          <a href="#"><svg class="ic6 right"><use href="#i-chevron"/></svg>Parameters</a>
          <a href="#"><svg class="ic6 right"><use href="#i-chevron"/></svg>Data</a>
          <a href="#"><svg class="ic6 right"><use href="#i-chevron"/></svg>Marks</a>
        </div>
        <div class="server">
          <a href="#" class="open"><svg class="ic6"><use href="#i-chevron"/></svg>Map Server</a>
          <p class="server-label">Map Server</p>
          <div class="radios">
            <label><input type="radio" name="server">Google Maps</label>
            <label class="highlight pick"><input type="radio" name="server" checked>Mapbox</label>
          </div>
          <p class="hint">The administrator can specify a Mapbox token in <a href="#">Site Settings</a> or below.</p>
          <div class="highlight token">
            <label for="token">Mapbox token for visual</label>
            <input type="text" id="token" value="pk.eyJ1IjoiZ2RlbGVvbiIsImEiOiJ">
          </div>
          <label class="atlas" for="atlas">Atlas server for visual</label>
          <input type="text" id="atlas">
        </div>
        <div class="rows six">
          <a href="#"><svg class="ic6 right"><use href="#i-chevron"/></svg>Map Style</a>
          <a href="#"><svg class="ic6 right"><use href="#i-chevron"/></svg>Choropleth</a>
          <a href="#"><svg class="ic6 right"><use href="#i-chevron"/></svg>Heatmap</a>
          <a href="#"><svg class="ic6 right"><use href="#i-chevron"/></svg>Cluster</a>
          <a href="#"><svg class="ic6 right"><use href="#i-chevron"/></svg>Circles</a>
          <a href="#"><svg class="ic6 right"><use href="#i-chevron"/></svg>Routes and Pins</a>
        </div>
      </section>
    </aside>

    <nav class="rail">
      <h4>DASH.</h4>
      <a href="#"><svg class="wide"><use href="#i-bars"/></svg>Visuals</a>
      <a href="#"><svg class="wide"><use href="#i-addfilter"/></svg>Filters</a>
      <a href="#"><svg><use href="#i-gears"/></svg>Settings</a>
      <a href="#"><svg><use href="#i-gem"/></svg>Style</a>
      <h4 class="second">VISUAL</h4>
      <a href="#" class="active"><svg><use href="#i-cubes"/></svg>Build</a>
      <a href="#"><svg><use href="#i-gears"/></svg>Settings</a>
      <a href="#"><svg><use href="#i-gem"/></svg>Style</a>
    </nav>
    <svg class="callout" viewBox="0 0 93 142"><path d="M0 142L93 0"/></svg>
  </main>
</body>
</html>
```
FILE: styles.css
```css
* {
  box-sizing: border-box;
}

body {
  margin: 0;
  min-height: 100vh;
  display: flex;
  flex-direction: column;
  font-family: Roboto, "Liberation Sans", sans-serif;
  font-size: 13px;
  color: #333;
  background: #e8e8e8;
}

h1, h2, h3, h4, p, ul {
  margin: 0;
  padding: 0;
  font-weight: 400;
}

a {
  color: #2f88c5;
  text-decoration: none;
}

button {
  font-family: inherit;
  font-size: inherit;
  color: inherit;
  padding: 0;
  border: none;
  background: none;
  cursor: pointer;
  display: flex;
  align-items: center;
}

svg {
  fill: currentColor;
  flex: none;
}

.sprite {
  position: absolute;
  width: 0;
  height: 0;
}

.ic6 { width: 6px; height: 6px; }
.ic8 { width: 8px; height: 8px; }
.ic10 { width: 10px; height: 10px; }
.ic11 { width: 11px; height: 11px; }
.ic12 { width: 12px; height: 12px; }
.ic14 { width: 14px; height: 14px; }
.dots { width: 12px; height: 3px; }
.small-dots { width: 10px; }
.caret { width: 8px; height: 5px; }
.tri { width: 4px; height: 7px; }
.blue { color: #2f88c5; }
.flip { transform: scaleX(-1); }
.right { transform: rotate(-90deg); }
.cube-line { stroke: #f9f9f9; }

/* top bar */
.header {
  display: flex;
  height: 52px;
  background: #1d252c;
  color: #c8cacc;
}

.logo {
  width: 295px;
  padding: 12px 0 0 31px;
  color: #fff;
}

.wordmark {
  display: block;
  width: 84px;
  height: 11px;
}

.product {
  display: block;
  margin-top: 4px;
  font-size: 14px;
  line-height: 16px;
  letter-spacing: 1px;
}

.nav {
  display: flex;
  flex: 1;
}

.nav a {
  padding: 0 19px;
  margin-left: -8px;
  margin-right: 7px;
  line-height: 53px;
  height: 55px;
  letter-spacing: 1px;
  color: #a5a9ac;
}

.nav a:first-child {
  margin-left: -48px;
  margin-right: 8px;
}

.nav a.active {
  color: #fff;
  border-bottom: 3px solid #4ab0f5;
}

.account {
  display: flex;
  gap: 37px;
  padding-right: 19px;
}

.account button {
  gap: 8px;
}

.account .user {
  gap: 4px;
  margin-left: -3px;
  letter-spacing: 1px;
}

.account .user .caret {
  margin-left: 1px;
}

/* toolbar */
.toolbar {
  display: flex;
  align-items: center;
  height: 35px;
  padding: 0 55px 0 27px;
  background: #f2f2f2;
  border-bottom: 1px solid #c9c9c9;
  box-shadow: 0 2px 4px rgba(0, 0, 0, 0.2);
  color: #444;
}

.btn {
  justify-content: center;
  gap: 4px;
  height: 24px;
  border-radius: 2px;
  font-size: 13px;
}

.btn-layout {
  width: 90px;
  border: 1px solid #2f88c5;
  background: #fff;
  font-weight: 300;
}

.btn-save {
  gap: 3px;
  width: 75px;
  margin-left: 5px;
  background: #8cc01f;
  color: #fff;
  box-shadow: 0 1px 3px rgba(0, 0, 0, 0.4);
}

.more {
  margin-left: 12px;
}

.private {
  gap: 2px;
  margin-left: 37px;
  font-size: 14px;
  font-weight: 300;
}

.private .caret {
  margin-left: 3px;
}

.designer {
  justify-content: center;
  gap: 5px;
  width: 215px;
  height: 29px;
  margin-left: auto;
  background: #4db6c4;
  color: #fff;
  font-size: 14px;
  font-weight: 500;
}

.workspace {
  position: relative;
  flex: 1;
  display: flex;
}

/* dashboard */
.canvas {
  flex: 1;
  min-width: 0;
  display: flex;
  padding: 15px 21px 0 15px;
  box-shadow: inset 0 5px 5px -3px rgba(0, 0, 0, 0.3);
}

.sheet {
  flex: 1;
  min-width: 0;
  padding: 11px 10px 0;
  background: #fff;
  box-shadow: 0 0 4px rgba(0, 0, 0, 0.25);
}

.report-head {
  display: grid;
  grid-template-columns: 47% auto 1fr;
  gap: 6px;
  padding: 0 5px 0 11px;
}

.report-head h1 {
  font-size: 24px;
  font-weight: 300;
  line-height: 28px;
}

.check {
  width: 20px;
  height: 20px;
  align-self: center;
}

.report-tools {
  display: flex;
  justify-content: flex-end;
  align-items: flex-start;
  gap: 13px;
  padding-top: 2px;
  color: #d2d2d2;
}

.report-tools .on {
  color: #000;
}

.subtitle {
  margin: 9px 0 0 12px;
  font-size: 13px;
  font-style: italic;
  font-weight: 300;
  line-height: 18px;
  color: #aaa;
}

.filter-drop {
  height: 38px;
  padding: 0 10px;
  line-height: 34px;
  border: 1px dashed #bbb;
  border-radius: 2px;
  font-size: 14px;
  font-weight: 300;
  color: #777;
}

.visual {
  position: relative;
  margin: 10px 20px 0 10px;
  padding: 7px 10px 11px;
  border: 1px solid #2f88c5;
  border-radius: 3px;
  box-shadow: 0 0 8px rgba(47, 136, 197, 0.4);
}

.visual h2 {
  margin-left: 1px;
  font-size: 16px;
  font-weight: 300;
  line-height: 18px;
}

.subtitle.small {
  margin: 6px 0 11px 1px;
  font-size: 12px;
  line-height: 15px;
}

.visual-tools {
  position: absolute;
  top: 2px;
  right: 2px;
  display: flex;
  gap: 9px;
  align-items: center;
  height: 22px;
  padding: 0 5px 0 6px;
  border: 1px solid #ccc;
  border-radius: 3px;
  background: #fff;
  box-shadow: 0 1px 3px rgba(0, 0, 0, 0.2);
  color: #999;
}

/* map */
.map {
  display: block;
  width: 100%;
  font-family: Roboto, "Liberation Sans", sans-serif;
}

.water {
  fill: #75cff0;
}

.land {
  fill: #e4ebc3;
}

.relief {
  fill: none;
  stroke: #cbd7a0;
  stroke-width: 4;
  stroke-opacity: 0.3;
  stroke-linejoin: round;
}

.state-line {
  fill: none;
  stroke: #bcbcc8;
}

.country-line {
  fill: none;
  stroke: #9a9ca4;
}

.map text {
  text-anchor: middle;
  paint-order: stroke;
  stroke: #f4f6e6;
  stroke-width: 2;
  stroke-linejoin: round;
}

.state {
  font-size: 10px;
  font-weight: 700;
  letter-spacing: 1px;
  fill: #22252c;
}

.city {
  font-size: 12px;
  fill: #4a4a4a;
}

.city-dot {
  fill: #000;
  stroke: #fff;
  stroke-width: 1;
}

.country {
  font-size: 16px;
  font-weight: 500;
  fill: #333;
}

.bahamas {
  font-size: 11px;
  font-weight: 500;
  fill: #222;
}

.map .sea text {
  stroke: none;
}

.sea {
  font-size: 16px;
  font-style: italic;
  font-weight: 300;
  letter-spacing: 2px;
  fill: #c3e8f8;
}

.merged {
  fill: none;
  stroke-linecap: round;
}

.pin {
  fill: #ff9800;
  stroke: #fff;
}

.cluster {
  fill: #ff9800;
}

.map .cluster text {
  font-size: 12px;
  font-weight: 500;
  fill: #4a3510;
  stroke: none;
}

.map .mapbox text {
  text-anchor: start;
  font-family: "Open Sans", Roboto, sans-serif;
  font-size: 15px;
  font-weight: 600;
  fill: #fff;
  stroke: #4f8da3;
}

/* side panels */
.panel {
  background: #f9f9f9;
  border-left: 1px solid #c4c4c4;
}

.visuals-panel {
  width: 213px;
}

.data-panel {
  position: relative;
  width: 215px;
}

.panel-title {
  display: flex;
  align-items: center;
  justify-content: space-between;
  height: 35px;
  padding: 0 11px 0 10px;
  border-bottom: 1px solid #ccc;
  font-size: 14px;
  color: #555;
}

.close {
  color: #d5d5d5;
}

.current-type {
  display: flex;
  align-items: center;
  height: 28px;
  padding: 0 14px 0 10px;
  border-bottom: 1px solid #d5d5d5;
  background: #fff;
  color: #555;
}

.current-type span {
  flex: 1;
  margin-left: 3px;
}

.current-type .ic8 {
  margin-left: 8px;
}

.ic-map {
  width: 23px;
  height: 19px;
}

.types {
  position: relative;
  display: grid;
  grid-template-columns: repeat(6, 32px);
  grid-auto-rows: 28px;
  padding: 10px 0 6px 7px;
  border-bottom: 1px solid #d5d5d5;
  background: #fff;
}

.types button {
  justify-content: center;
  flex-direction: column;
}

.types svg {
  width: 24px;
  height: 20px;
}

.types .selected {
  width: 32px;
  border: 2px solid #2f88c5;
}

.kpi b {
  font-size: 11px;
  font-weight: 400;
  line-height: 11px;
}

.kpi small {
  font-size: 5px;
  line-height: 6px;
  color: #999;
}

.cloud b {
  font-size: 8px;
  font-weight: 900;
  line-height: 7px;
  color: #1e9aac;
  transform: rotate(14deg);
}

.cloud i {
  margin-left: 6px;
  font-size: 6px;
  font-weight: 900;
  line-height: 7px;
  color: #5f7482;
  transform: rotate(-25deg);
}

.action b {
  width: 24px;
  font-size: 5px;
  line-height: 11px;
  background: #1e9aac;
  color: #fff;
}

.sql b {
  width: 24px;
  border: 1px solid #ccc;
  border-top: 3px solid #b3b3b3;
  font-size: 10px;
  font-weight: 400;
  line-height: 15px;
  color: #333;
}

.ring {
  position: absolute;
  top: 113px;
  left: 32px;
  width: 48px;
  height: 46px;
  border: 5px solid #f66a14;
  border-radius: 50%;
  box-shadow: 0 0 3px rgba(0, 0, 0, 0.5);
}

.shelves {
  padding: 16px 15px 0 14px;
  color: #555;
}

.shelf-label {
  line-height: 16px;
}

.highlight {
  border: 5px solid #f66a14;
  box-shadow: 0 0 4px rgba(30, 60, 80, 0.6);
}

.geo {
  display: flex;
  flex-direction: column;
  gap: 3px;
  margin: -2px 0 5px -1px;
  padding: 2px 1px;
}

.pill {
  gap: 4px;
  height: 23px;
  padding: 0 4px 0 5px;
  border: 1px solid #ccc;
  border-radius: 3px;
  background: #e5f4fd;
  font-size: 12px;
  color: #222;
}

.pill .tri {
  margin-left: auto;
  color: #2f88c5;
}

.tag {
  display: flex;
  align-items: center;
  justify-content: center;
  width: 15px;
  height: 16px;
  border: 1px solid #bbb;
  border-radius: 2px;
  background: #fff;
  font-family: "Liberation Serif", serif;
  font-size: 12px;
  font-weight: 700;
  line-height: 14px;
  color: #555;
}

.tag.hash {
  font-family: Roboto, sans-serif;
  font-weight: 400;
}

.shelf {
  height: 33px;
  margin: 1px 0 7px;
  padding-left: 8px;
  border: 1px dashed #b5b5b5;
  border-radius: 2px;
  background: #fff;
  font-size: 12px;
  line-height: 28px;
  color: #c0c0c0;
}

.refresh {
  gap: 5px;
  height: 30px;
  margin-top: 11px;
  padding: 0 16px 0 18px;
  border-radius: 2px;
  background: #2f88c5;
  color: #fff;
  font-size: 12px;
  font-weight: 500;
}

/* dataset */
.data-body {
  padding: 8px 15px 0;
}

.dataset {
  display: flex;
  align-items: center;
  gap: 3px;
  height: 20px;
  font-size: 12px;
}

.dataset span {
  flex: 1;
}

.cubes {
  width: 16px;
  height: 13px;
  color: #888;
}

.sample {
  display: flex;
  align-items: center;
  gap: 3px;
  margin-top: 15px;
  font-size: 12px;
}

.sample button {
  height: 20px;
  padding: 0 5px;
  border: 1px solid #2f88c5;
  border-radius: 2px;
  background: #fff;
  font-size: 11px;
}

.search {
  display: flex;
  align-items: center;
  height: 24px;
  margin: 10px 0 11px;
  padding: 0 5px;
  border: 1px solid #bbb;
  border-radius: 3px;
  background: #fff;
  color: #999;
}

.search input {
  flex: 1;
  min-width: 0;
  padding: 0 0 0 5px;
  border: none;
  outline: none;
  font-family: inherit;
  font-size: 12px;
}

.search input::placeholder {
  color: #888;
}

.search button {
  color: #555;
}

.group {
  display: flex;
  align-items: center;
  justify-content: space-between;
  height: 26px;
  padding: 0 3px;
  background: #98a0a6;
  color: #fff;
  font-size: 14px;
  font-weight: 500;
}

.group.measures {
  margin-top: 22px;
}

.count {
  width: 21px;
  border-radius: 9px;
  background: #b5b8ba;
  text-align: center;
  font-size: 12px;
  font-weight: 700;
  line-height: 18px;
}

.source {
  display: flex;
  align-items: center;
  gap: 2px;
  height: 21px;
  margin-top: 4px;
  padding-left: 2px;
  background: #cdd1d5;
  font-size: 12px;
  color: #444;
}

.fields {
  display: flex;
  flex-direction: column;
  gap: 2px;
  margin-top: 2px;
  list-style: none;
}

.fields li {
  display: flex;
  align-items: center;
  gap: 4px;
  height: 21px;
  padding-left: 3px;
  border: 1px solid #ddd;
  border-radius: 2px;
  background: #f0f0f0;
  font-size: 12px;
}

/* floating visual settings */
.settings-popup {
  position: absolute;
  top: 466px;
  left: -3px;
  width: 137px;
  border: 2px solid #a0a0a0;
  background: #f9f9f9;
  font-size: 9px;
  color: #555;
}

.popup-head {
  display: flex;
  align-items: center;
  height: 23px;
  padding: 0 2px 0 0;
  border-bottom: 1px solid #ddd;
  color: #ccc;
}

.popup-head span {
  flex: 1;
  margin-left: 2px;
  color: #666;
}

.popup-head .right {
  color: #2f88c5;
}

.popup-head .ic6 {
  margin-left: 6px;
}

.apply {
  display: flex;
  align-items: flex-start;
  height: 33px;
  padding: 3px 5px 0;
  border-bottom: 1px solid #ddd;
  background: #fff;
  line-height: 13px;
}

.apply label {
  flex: 1;
  padding-right: 3px;
}

.apply input {
  appearance: none;
  width: 16px;
  height: 5px;
  margin: 5px 0 0;
  border-radius: 3px;
  background: #999;
}

.apply input::before {
  content: "";
  display: block;
  width: 10px;
  height: 10px;
  margin-top: -3px;
  border-radius: 50%;
  background: #f2f2f2;
  box-shadow: 0 0 2px rgba(0, 0, 0, 0.4);
}

.rows {
  display: flex;
  flex-direction: column;
}

.rows.four {
  height: 98px;
}

.rows.six {
  height: 146px;
}

.rows a {
  flex: 1;
  display: flex;
  align-items: center;
  gap: 3px;
  padding-left: 5px;
  border-bottom: 1px solid #ddd;
  font-weight: 500;
}

.rows.six a:last-child {
  border-bottom: none;
}

.server {
  padding: 4px 3px 7px 5px;
  border-bottom: 1px solid #ddd;
}

.server .open {
  display: flex;
  align-items: center;
  gap: 3px;
  height: 15px;
  font-weight: 500;
}

.server-label {
  font-size: 8px;
  line-height: 20px;
  color: #222;
}

.radios {
  display: flex;
  align-items: center;
  height: 16px;
  font-size: 8px;
  color: #222;
}

.radios label {
  display: flex;
  align-items: center;
  white-space: nowrap;
}

.radios input {
  width: 9px;
  height: 9px;
  margin: 0 2px 0 0;
}

.highlight.pick {
  position: relative;
  border-width: 4px;
  height: 26px;
  padding: 0 8px 0 4px;
}

.highlight.pick input {
  margin-right: 3px;
}

.hint {
  margin-top: 2px;
  font-size: 8px;
  line-height: 12px;
  color: #999;
}

.highlight.token {
  position: relative;
  border-width: 4px;
  height: 41px;
  margin: 1px -2px 0 -5px;
  padding: 0 1px;
  background: #f9f9f9;
}

.token label,
.atlas {
  display: block;
  font-size: 8px;
  line-height: 14px;
  color: #222;
}

.server input[type="text"] {
  display: block;
  width: 100%;
  height: 15px;
  padding: 0 3px;
  border: 1px solid #ccc;
  border-radius: 2px;
  background: #fff;
  font-family: inherit;
  font-size: 8px;
  color: #555;
}

.token input[type="text"] {
  margin-top: 2px;
  border-color: #66afe9;
}

.atlas {
  margin-top: -5px;
}

/* right rail */
.rail {
  width: 56px;
  border-left: 1px solid #bbb;
  background: #eee;
}

.rail h4 {
  height: 23px;
  border-bottom: 1px solid #ccc;
  background: #e4e4e4;
  font-size: 11px;
  line-height: 22px;
  text-align: center;
  color: #777;
}

.rail .second {
  height: 24px;
  margin-top: 11px;
  border-top: 1px solid #bbb;
}

.rail a {
  position: relative;
  display: flex;
  flex-direction: column;
  align-items: center;
  gap: 3px;
  height: 54px;
  padding-top: 10px;
  font-size: 12px;
  line-height: 16px;
}

.rail a svg {
  width: 18px;
  height: 15px;
}

.rail a .wide {
  width: 24px;
}

.rail .active {
  height: 55px;
  background: #737b82;
  color: #fff;
  font-weight: 700;
}

.rail .active .cube-line {
  stroke: #737b82;
}

.rail .active::before {
  content: "";
  position: absolute;
  left: -10px;
  top: 22px;
  border: 9px solid transparent;
  border-left: none;
  border-right-color: #737b82;
}

.callout {
  position: absolute;
  top: 354px;
  right: 43px;
  width: 93px;
  height: 142px;
  overflow: visible;
  filter: drop-shadow(1px 1px 2px rgba(0, 0, 0, 0.4));
}

.callout path {
  stroke: #f66a14;
  stroke-width: 2;
}
```
